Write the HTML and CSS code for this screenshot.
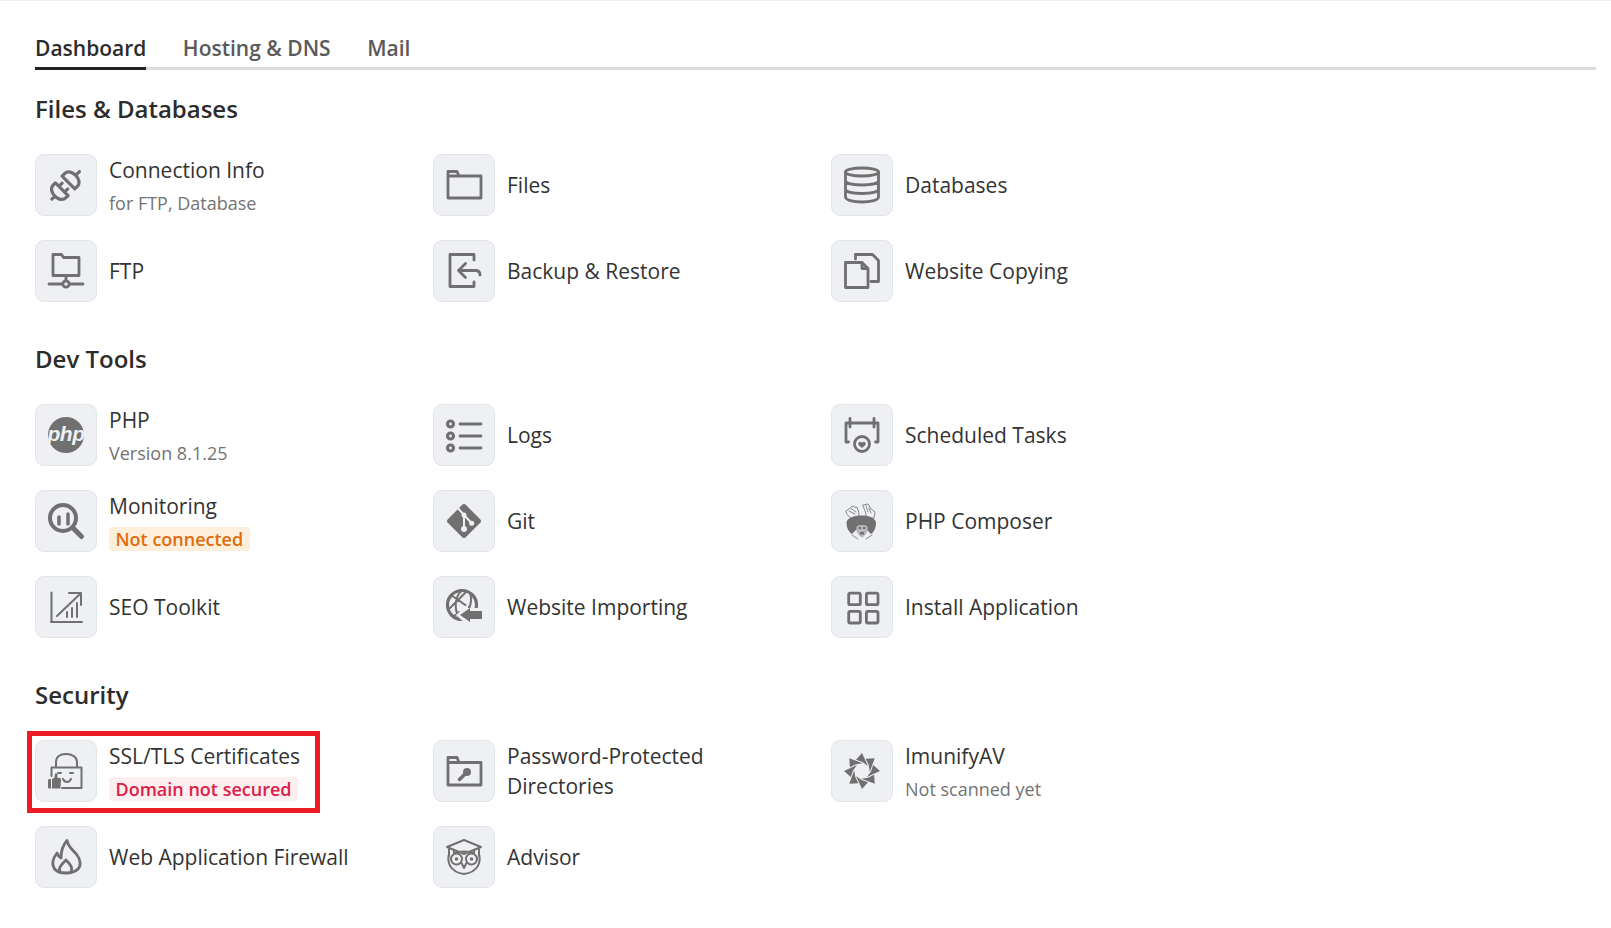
FILE: index.html
```html
<!DOCTYPE html>
<html lang="en">
<head>
<meta charset="utf-8">
<title>Dashboard</title>
<link rel="stylesheet" href="styles.css">
</head>
<body>
<main class="page">
  <nav class="tabs">
    <a class="tab active">Dashboard</a>
    <a class="tab">Hosting &amp; DNS</a>
    <a class="tab">Mail</a>
  </nav>

  <section class="section">
    <h2 class="heading">Files &amp; Databases</h2>
    <div class="grid">
      <div class="item">
        <div class="ic"><svg viewBox="0 0 36 36"><g transform="rotate(-45 18 18)"><path class="w3" d="M21.500 9V27M21.500 9H25C34 9 34 27 25 27H21.500M32 18H37M12 9V27M12 9H9C0 9 0 27 9 27H12M2 18H-2M12 14H16.500M12 22H16.500"/></g></svg></div>
        <div class="txt"><div class="name">Connection Info</div><div class="sub">for FTP, Database</div></div>
      </div>
      <div class="item">
        <div class="ic"><svg viewBox="0 0 36 36"><path d="M2 31V4.500H11L13 9H35V31ZM2 9H13"/></svg></div>
        <div class="txt"><div class="name">Files</div></div>
      </div>
      <div class="item">
        <div class="ic"><svg viewBox="0 0 36 36"><ellipse cx="18" cy="5" rx="16.500" ry="4"/><path d="M1.500 5V30C1.500 33 9 35 18 35S34.500 33 34.500 30V5M1.500 13.500C1.500 16.500 9 18 18 18S34.500 16.500 34.500 13.500M1.500 22C1.500 25 9 26.500 18 26.500S34.500 25 34.500 22"/></svg></div>
        <div class="txt"><div class="name">Databases</div></div>
      </div>
      <div class="item">
        <div class="ic"><svg viewBox="0 0 36 36"><path d="M5 22.500V1.500H13.500L15.500 4.500H31V22.500ZM18 22.500V28M1 31H14.500M21.500 31H35"/><circle cx="18" cy="31" r="3.200"/></svg></div>
        <div class="txt"><div class="name">FTP</div></div>
      </div>
      <div class="item">
        <div class="ic"><svg viewBox="0 0 36 36"><path d="M28 7V1.500H4V33.500H28V29M19.500 10.500L12.500 17.500L19.500 24.500M12.500 17.500H29.500Q34 17.500 34 22"/></svg></div>
        <div class="txt"><div class="name">Backup &amp; Restore</div></div>
      </div>
      <div class="item">
        <div class="ic"><svg viewBox="0 0 36 36"><path d="M11.500 6V1.500H28.500L34.500 7.500V28.500H27M1.500 34.500V9.500H18L24 15.500V34.500ZM18 9.500V15.500H24"/></svg></div>
        <div class="txt"><div class="name">Website Copying</div></div>
      </div>
    </div>
  </section>

  <section class="section">
    <h2 class="heading">Dev Tools</h2>
    <div class="grid">
      <div class="item">
        <div class="ic"><svg viewBox="0 0 36 36"><circle class="solid" cx="18" cy="18" r="18"/><text class="php" x="18" y="24" text-anchor="middle">php</text></svg></div>
        <div class="txt"><div class="name">PHP</div><div class="sub">Version 8.1.25</div></div>
      </div>
      <div class="item">
        <div class="ic"><svg viewBox="0 0 36 36"><path d="M14 7H35M14 19H35M14 31H35"/><circle class="w3" cx="4.500" cy="7" r="3"/><circle class="w3" cx="4.500" cy="19" r="3"/><circle class="w3" cx="4.500" cy="31" r="3"/></svg></div>
        <div class="txt"><div class="name">Logs</div></div>
      </div>
      <div class="item">
        <div class="ic"><svg viewBox="0 0 36 36"><path d="M6 1.500V10M30 1.500V10"/><path d="M6 6H30M6 6H2V25H4.500M30 6H34V25H31.500"/><circle cx="18" cy="27" r="7.500"/><path class="solid" d="M18 31C14.500 28.500 13.500 27 14.700 25.500C16 24.300 17.300 25 18 26C18.700 25 20 24.300 21.300 25.500C22.500 27 21.500 28.500 18 31Z"/></svg></div>
        <div class="txt"><div class="name">Scheduled Tasks</div></div>
      </div>
      <div class="item">
        <div class="ic"><svg viewBox="0 0 36 36"><circle class="w4" cx="15" cy="15" r="13"/><path class="w5" d="M26 26L33.500 33.500"/><path class="w4n" d="M11 14V21M20 11V21"/></svg></div>
        <div class="txt"><div class="name">Monitoring</div><span class="badge warn">Not connected</span></div>
      </div>
      <div class="item">
        <div class="ic"><svg viewBox="0 0 36 36"><rect class="solid" x="5.300" y="5.300" width="25.400" height="25.400" rx="2.500" transform="rotate(45 18 18)"/><path class="cut" d="M12.300 5.500L18 12V25.500M18 12L25.700 20.300"/><circle class="dot" cx="18" cy="26" r="3"/><circle class="dot" cx="18" cy="12" r="2.500"/><circle class="dot" cx="25.700" cy="20.300" r="2.500"/></svg></div>
        <div class="txt"><div class="name">Git</div></div>
      </div>
      <div class="item">
        <div class="ic"><svg viewBox="0 0 36 36"><path class="hand" d="M2 8L9 3L11 4.500L13 4L15 10L14 14L8 16L3.500 12Z"/><path class="hand" d="M19 2L24 1L27 6L31 9L30 15L23 15L21 8Z"/><path class="hair" d="M5 8L11 11M7 5.500L12 9M22 3L24 9M25 5L27 10"/><path class="solid" d="M2.500 20C2.500 15 10 12.500 17.500 12.500S32 15 32 20C32 25 30 29 27 31L23 27H12L8 31C5 29 2.500 25 2.500 20Z"/><path class="skin" d="M13 23C15 21.500 21 21.500 23 23C25 26 23 32 18 34.500C13 32 11 26 13 23Z"/><path class="solid" d="M14.500 24H17V26H14.500ZM19 24H21.500V26H19ZM16 29H20V31.500H16Z"/><path class="hair" d="M8 32L14 36M28 32L22 36"/></svg></div>
        <div class="txt"><div class="name">PHP Composer</div></div>
      </div>
      <div class="item">
        <div class="ic"><svg viewBox="0 0 36 36"><path d="M3.500 33V3.500M3 33H34M9 27L32 5M21 4H33V16" class="mid"/><path class="mid" d="M19 28V23M24 28V19M29 28V14"/></svg></div>
        <div class="txt"><div class="name">SEO Toolkit</div></div>
      </div>
      <div class="item">
        <div class="ic"><svg viewBox="0 0 36 36"><circle class="w3" cx="16" cy="16" r="14.500"/><path class="mid" d="M16 1.500C8 8 8 22 14 30M5 6L25 20M24 4C26 10 25 15 23 20M3 20L13 10L20 3M8 27L13 23"/><path class="halo" d="M22 15V19H36V33H22V37L10 26Z"/><path class="solid" d="M24 19V22H36V30H24V33L14 26Z"/></svg></div>
        <div class="txt"><div class="name">Website Importing</div></div>
      </div>
      <div class="item">
        <div class="ic"><svg viewBox="0 0 36 36"><rect x="4.700" y="4.100" width="11.600" height="11.600" rx="1.500"/><rect x="22.400" y="4.100" width="11.600" height="11.600" rx="1.500"/><rect x="4.700" y="22.400" width="11.600" height="11.600" rx="1.500"/><rect x="22.400" y="22.400" width="11.600" height="11.600" rx="1.500"/></svg></div>
        <div class="txt"><div class="name">Install Application</div></div>
      </div>
    </div>
  </section>

  <section class="section">
    <h2 class="heading">Security</h2>
    <div class="grid">
      <div class="item marked">
        <div class="ic"><svg viewBox="0 0 36 36"><path class="mid" d="M8 14V9C8 4 12 1 18 1S29 4 29 9V14M14 35H33.500V14.500H3.500V23M10 20H13M22 20H25M15 26C17 30 21 30 23 26"/><path class="solid" d="M0 27C0 26 1 26 3 26V35.500C1 35.500 0 35.500 0 34.500ZM4 26L6.500 24.500L7 21C7 20 9.500 20 9.500 22L9.500 25H12C13 25 13 26 13 27L12.500 34C12.500 35 12 35.500 11 35.500H4Z"/></svg></div>
        <div class="txt"><div class="name">SSL/TLS Certificates</div><span class="badge danger">Domain not secured</span></div>
        <div class="mark"></div>
      </div>
      <div class="item">
        <div class="ic"><svg viewBox="0 0 36 36"><path d="M2 32V4.500H11L13 9.500H35V32ZM2 9.500H13"/><circle class="solid" cx="21" cy="19" r="4"/><path class="w4n" d="M19 21L13.500 26.500"/></svg></div>
        <div class="txt"><div class="name">Password-Protected<br>Directories</div></div>
      </div>
      <div class="item">
        <div class="ic"><svg viewBox="0 0 36 36"><defs><path id="blade" d="M18 0L24 13L18.500 9L12 6.800Z"/></defs><g class="solid"><use href="#blade"/><use href="#blade" transform="rotate(45 18 18)"/><use href="#blade" transform="rotate(90 18 18)"/><use href="#blade" transform="rotate(135 18 18)"/><use href="#blade" transform="rotate(180 18 18)"/><use href="#blade" transform="rotate(225 18 18)"/><use href="#blade" transform="rotate(270 18 18)"/><use href="#blade" transform="rotate(315 18 18)"/></g></svg></div>
        <div class="txt"><div class="name">ImunifyAV</div><div class="sub">Not scanned yet</div></div>
      </div>
      <div class="item">
        <div class="ic"><svg viewBox="0 0 36 36"><path d="M19 1.500C20 8 25 11 29 16C33 21 33 27 30 30C27 33 23 34 18 34C12 34 8 33 6 29C3 24 6 18 9 14C10 17 11 18 13 19C13 12 15 6 19 1.500Z"/><path d="M12 33C10 29 13 26 18 21C23 26 25 29 23 33"/></svg></div>
        <div class="txt"><div class="name">Web Application Firewall</div></div>
      </div>
      <div class="item">
        <div class="ic"><svg viewBox="0 0 36 36"><path class="mid" d="M18 1L35 8L18 15L1 8ZM8 11V14C12 12 24 12 28 14V11M3 9V17M33 9V17M3 15C1 22 3 33 18 35C33 33 35 22 33 15"/><circle class="mid" cx="10.500" cy="20" r="5.500"/><circle class="mid" cx="25.500" cy="20" r="5.500"/><path class="mid" d="M15.500 24L18 29L20.500 24"/><circle class="solid" cx="10.500" cy="20" r="1.800"/><circle class="solid" cx="25.500" cy="20" r="1.800"/></svg></div>
        <div class="txt"><div class="name">Advisor</div></div>
      </div>
    </div>
  </section>
</main>
</body>
</html>
```
FILE: styles.css
```css
* { box-sizing: border-box; }
html, body { margin: 0; padding: 0; background: #fff; }
body {
  font-family: "Open Sans", "Liberation Sans", sans-serif;
  color: #333;
  border-top: 1px solid #f0f0f0;
}
.page { padding: 0 15px 0 35px; }

.tabs {
  display: flex;
  gap: 36.5px;
  padding-top: 30px;
  height: 69px;
  border-bottom: 3px solid #dcdcdc;
}
.tab {
  display: block;
  height: 39px;
  font-size: 21px;
  line-height: 35px;
  font-weight: 600;
  color: #5a5a5a;
}
.tab.active { color: #2c2c2c; border-bottom: 3px solid #222; }

.section { margin-bottom: 42px; }
.tabs + .section { margin-top: 24px; }
.heading {
  margin: 0 0 30px;
  font-size: 24px;
  line-height: 29px;
  padding-bottom: 1px;
  font-weight: 600;
  color: #2c2c2c;
}
.grid {
  display: grid;
  grid-template-columns: repeat(3, 398px);
  row-gap: 24px;
}
.item {
  position: relative;
  display: flex;
  align-items: center;
  gap: 12px;
  height: 62px;
}
.ic {
  flex: none;
  display: flex;
  align-items: center;
  justify-content: center;
  width: 62px;
  height: 62px;
  background: #eef0f3;
  border: 1px solid #e2e4e7;
  border-radius: 9px;
}
.ic svg {
  display: block;
  width: 36px;
  height: 36px;
  fill: none;
  stroke: #707070;
  stroke-width: 2.8;
  stroke-linejoin: round;
  stroke-linecap: round;
  overflow: visible;
}
.ic .solid { fill: #707070; stroke: none; }
.ic .mid { stroke-width: 2; }
.ic .w3 { stroke-width: 3.200; }
.ic .w4 { stroke-width: 4; }
.ic .w4n { stroke-width: 3.500; }
.ic .w5 { stroke-width: 5; }
.ic .hair { stroke-width: 1; stroke: #8a8a8a; }
.ic .hand { stroke-width: 1; stroke: #8a8a8a; fill: #eef0f3; }
.ic .skin { fill: #b5b7b9; stroke: none; }
.ic .halo { fill: #eef0f3; stroke: none; }
.ic .cut { stroke: #eef0f3; stroke-width: 2; }
.ic .dot { fill: #eef0f3; stroke: none; }
.ic .php {
  font-family: "Liberation Sans", sans-serif;
  font-size: 21px;
  font-weight: 700;
  font-style: italic;
  fill: #eef0f3;
  stroke: none;
  letter-spacing: -0.5px;
}

.txt { min-width: 0; }
.name { font-size: 21px; line-height: 30px; color: #333; }
.sub { margin-top: 6px; font-size: 18px; line-height: 25px; color: #737373; }
.badge {
  display: table;
  margin-top: 6px;
  margin-bottom: 1px;
  padding: 0 6.5px;
  font-size: 18px;
  line-height: 24px;
  font-weight: 600;
  border-radius: 3px;
}
.warn { background: #fdefdc; color: #df6c0c; }
.danger { background: #fdeef0; color: #dc2048; }

.mark {
  position: absolute;
  left: -8px;
  top: -9px;
  width: 293px;
  height: 82px;
  border: 5px solid #ed1c24;
  pointer-events: none;
}
```
